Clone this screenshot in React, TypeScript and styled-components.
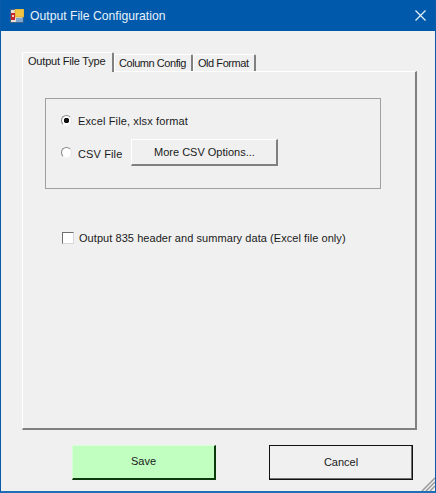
import styled, { createGlobalStyle } from "styled-components";

const GlobalStyle = createGlobalStyle`
  html, body {
    margin: 0;
    padding: 0;
    background: #f0f0f0;
  }
  * {
    box-sizing: border-box;
  }
`;

const Window = styled.div`
  position: relative;
  width: 436px;
  height: 493px;
  display: flex;
  flex-direction: column;
  background: #f0f0f0;
  border: 1px solid #0a5cab;
  border-top: 0;
  border-bottom: 2px solid #1f6fb8;
  font-family: "Liberation Sans", Arial, sans-serif;
  font-size: 11px;
  color: #1a1a1a;
`;

const TitleBar = styled.div`
  height: 31px;
  flex: none;
  display: flex;
  align-items: center;
  padding: 0 9px 0 9px;
  gap: 6px;
  background: #0159ab;
  color: #e6f2fb;
  font-size: 12.2px;
`;

const TitleText = styled.span`
  flex: 1;
`;

const Body = styled.div`
  flex: 1;
  display: flex;
  flex-direction: column;
  padding: 21px 18px 0 21px;
`;

const TabStrip = styled.div`
  display: flex;
  align-items: flex-end;
  height: 19px;
  flex: none;
  position: relative;
  z-index: 1;
`;

const Tab = styled.div<{ $active?: boolean; $width: number }>`
  height: ${(p) => (p.$active ? "20px" : "17px")};
  margin-bottom: ${(p) => (p.$active ? "-1px" : "0")};
  padding: ${(p) => (p.$active ? "1px 0 0 5px" : "1px 0 0 4px")};
  width: ${(p) => p.$width}px;
  background: #f0f0f0;
  border-top: 1px solid #fff;
  border-left: 1px solid #fff;
  border-right: 2px solid #808080;
  border-top-left-radius: 2px;
  border-top-right-radius: 2px;
  white-space: nowrap;
  line-height: 14px;
  letter-spacing: ${(p) => (p.$active ? "-0.2px" : "-0.45px")};
`;

const TabPanel = styled.div`
  height: 359px;
  flex: none;
  display: flex;
  flex-direction: column;
  padding: 26px 34px 0 22px;
  border-top: 1px solid #fff;
  border-left: 1px solid #fff;
  border-right: 2px solid #808080;
  border-bottom: 2px solid #808080;
`;

const GroupBox = styled.div`
  height: 91px;
  flex: none;
  display: flex;
  flex-direction: column;
  gap: 12px;
  padding: 14px 0 0 15px;
  border: 1px solid #a0a0a0;
`;

const OptionRow = styled.label<{ $height: number }>`
  display: flex;
  align-items: center;
  gap: 6px;
  height: ${(p) => p.$height}px;
`;

const OptionText = styled.span`
  padding-top: 2px;
  letter-spacing: 0.13px;
`;

const RadioDot = styled.span<{ $checked?: boolean }>`
  width: 11px;
  height: 11px;
  flex: none;
  border-radius: 50%;
  background: radial-gradient(
    circle,
    ${(p) => (p.$checked ? "#111 0 2.5px, #fff 3px" : "#fff 0 3px")}
  );
  border: 1px solid;
  border-color: #8a8a8a #e4e4e4 #f6f6f6 #8a8a8a;
`;

const Push = styled.button<{ $primary?: boolean; $outlined?: boolean }>`
  font: inherit;
  color: inherit;
  padding: 0 0 2px;
  background: ${(p) => (p.$primary ? "#c0ffc0" : "#f0f0f0")};
  border-style: solid;
  border-width: ${(p) => (p.$outlined ? "1px" : "1px 2px 2px 1px")};
  border-color: ${(p) =>
    p.$primary
      ? "#d8ffd8 #0c3a0c #0c3a0c #d8ffd8"
      : p.$outlined
        ? "#111"
        : "#fff #808080 #808080 #fff"};
  box-shadow: ${(p) => (p.$outlined ? "inset -1px -1px 0 #707070" : "none")};
`;

const CsvButton = styled(Push)`
  width: 147px;
  height: 27px;
  margin-left: 3px;
  padding: 0;
`;

const HeaderOption = styled.label`
  display: flex;
  align-items: center;
  gap: 5px;
  margin: 42px 0 0 17px;
  height: 14px;
  letter-spacing: 0.06px;
`;

const CheckBox = styled.span`
  width: 12px;
  height: 12px;
  flex: none;
  background: #fff;
  border: 1px solid;
  border-color: #6e6e6e #d8d8d8 #d8d8d8 #6e6e6e;
`;

const Footer = styled.div`
  display: flex;
  justify-content: space-between;
  padding: 15px 4px 0 50px;
`;

const FooterButton = styled(Push)`
  width: 144px;
  height: 35px;
`;

const Grip = styled.svg`
  position: absolute;
  right: 0;
  bottom: 0;
`;

function AppIcon() {
  return (
    <svg width="14" height="14" viewBox="0 0 14 14">
      <rect x="0.5" y="0.5" width="12.5" height="13" fill="#e4e2d8" stroke="#3f6488" />
      <rect x="5" y="0" width="9" height="8" fill="#f3c544" stroke="#c79a34" strokeWidth="0.6" />
      <rect x="1" y="4" width="4" height="7" fill="#c8242c" />
      <rect x="2" y="6" width="2" height="2" fill="#f4d0c8" />
      <rect x="6" y="9" width="7" height="4" fill="#7fa6cf" />
    </svg>
  );
}

export default function App() {
  return (
    <>
      <GlobalStyle />
      <Window>
        <TitleBar>
          <AppIcon />
          <TitleText>Output File Configuration</TitleText>
          <svg width="11" height="11" viewBox="0 0 11 11">
            <path d="M0.5 0.5L10.5 10.5M10.5 0.5L0.5 10.5" stroke="#e6f2fb" strokeWidth="1.2" fill="none" />
          </svg>
        </TitleBar>
        <Body>
          <TabStrip>
            <Tab $active $width={92}>Output File Type</Tab>
            <Tab $width={79}>Column Config</Tab>
            <Tab $width={63}>Old Format</Tab>
          </TabStrip>
          <TabPanel>
            <GroupBox>
              <OptionRow $height={14}>
                <RadioDot $checked />
                <OptionText>Excel File, xlsx format</OptionText>
              </OptionRow>
              <OptionRow $height={27}>
                <RadioDot />
                <OptionText>CSV File</OptionText>
                <CsvButton>More CSV Options...</CsvButton>
              </OptionRow>
            </GroupBox>
            <HeaderOption>
              <CheckBox />
              Output 835 header and summary data (Excel file only)
            </HeaderOption>
          </TabPanel>
          <Footer>
            <FooterButton $primary>Save</FooterButton>
            <FooterButton $outlined>Cancel</FooterButton>
          </Footer>
        </Body>
        <Grip width="14" height="14" viewBox="0 0 14 14">
          <path d="M14 1L1 14M14 5L5 14M14 9L9 14" stroke="#9a9a9a" strokeWidth="1.5" fill="none" />
        </Grip>
      </Window>
    </>
  );
}
